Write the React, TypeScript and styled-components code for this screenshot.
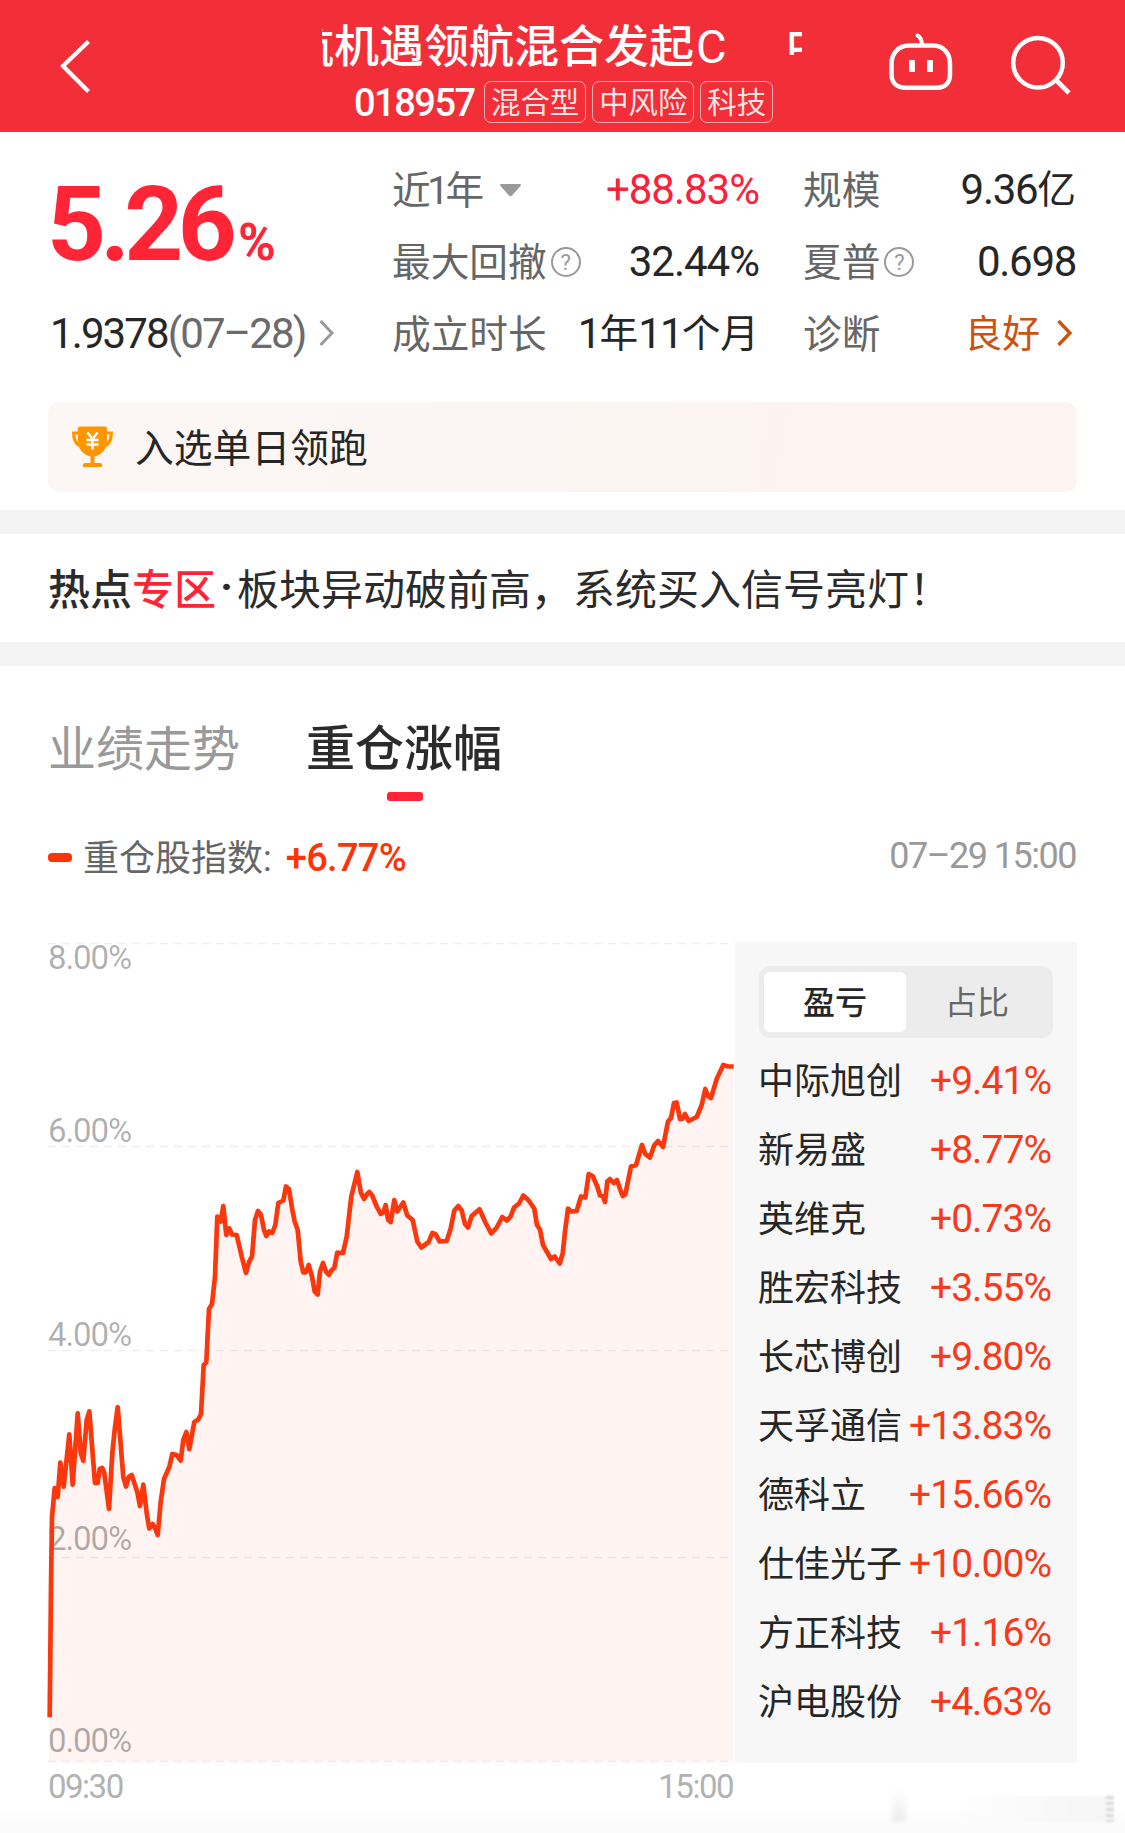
import React from 'react';
import styled, { createGlobalStyle } from 'styled-components';

const FONT = `Roboto, "Noto Sans CJK SC", "Liberation Sans", sans-serif`;

const GlobalStyle = createGlobalStyle`
  *, *::before, *::after { box-sizing: border-box; }
  body { margin: 0; background: #fff; font-family: ${FONT}; color: #262626; }
`;

const Page = styled.main`
  width: 1125px;
  height: 1833px;
  overflow: hidden;
  display: flex;
  flex-direction: column;
  background: #fff;
`;

/* ---------- header ---------- */

const Header = styled.header`
  height: 132px;
  flex: none;
  display: flex;
  background: #f22f38;
  color: #fff;
`;

const HeaderSide = styled.div<{ $width: number }>`
  width: ${(p) => p.$width}px;
  flex: none;
`;

const TitleColumn = styled.div`
  width: 480px;
  padding-top: 14px;
`;

const Marquee = styled.div`
  height: 63px;
  padding-top: 4px;
  overflow: hidden;
  display: flex;
  gap: 59px;
  white-space: nowrap;
  font-size: 45px;
  line-height: 58px;
  font-weight: 500;
`;

const MarqueeItem = styled.span<{ $shift?: number }>`
  flex: none;
  margin-left: ${(p) => p.$shift ?? 0}px;
`;

const ShareClass = styled.span`
  font-size: 47px;
  font-weight: 400;
  margin-left: 2px;
`;

const CodeLine = styled.div`
  display: flex;
  align-items: center;
  margin: 4px 0 0 32px;
  height: 42px;
`;

const FundCode = styled.span`
  width: 130px;
  padding-top: 2px;
  font-size: 38px;
  line-height: 42px;
  font-weight: 500;
  letter-spacing: -1.5px;
`;

const Tag = styled.span`
  height: 42px;
  padding: 0 6px;
  margin-right: 6px;
  border: 1.5px solid rgba(255, 255, 255, 0.6);
  border-radius: 7px;
  font-size: 29.4px;
  line-height: 42px;
  color: rgba(255, 255, 255, 0.88);
  white-space: nowrap;
`;

/* ---------- summary ---------- */

const Summary = styled.section`
  height: 270px;
  flex: none;
  display: flex;
  padding: 21px 48px 0 50px;
`;

const ReturnColumn = styled.div`
  width: 342px;
`;

const DayReturn = styled.div`
  height: 144px;
  padding-top: 12px;
  margin-left: -3px;
  font-size: 103px;
  line-height: 120px;
  font-weight: 700;
  letter-spacing: -5.8px;
  color: #ff2436;
  white-space: nowrap;

  small {
    font-size: 51px;
    margin-left: 7px;
  }
`;

const NetValue = styled.div`
  height: 72px;
  display: flex;
  align-items: center;
  font-size: 42px;
  letter-spacing: -1.9px;
  color: #262626;

  span { color: #6b6b6b; }
  svg { margin-left: 14px; }
`;

const StatColumn = styled.div<{ $width: number; $gap?: number }>`
  width: ${(p) => p.$width}px;
  margin-right: ${(p) => p.$gap ?? 0}px;
`;

const StatRow = styled.div`
  height: 72px;
  display: flex;
  align-items: center;
  justify-content: space-between;
  white-space: nowrap;
`;

const StatLabel = styled.span`
  display: flex;
  align-items: center;
  padding-top: 3px;
  font-size: 38.7px;
  line-height: 56px;
  color: #666;
`;

const NarrowDigit = styled.span`
  margin: 0 -3.5px;
`;

const StatValue = styled.span<{ $color?: string; $cjk?: boolean; $spacing?: number }>`
  display: flex;
  align-items: center;
  padding-top: 2px;
  font-size: ${(p) => (p.$cjk ? 37.8 : 42)}px;
  line-height: 56px;
  letter-spacing: ${(p) => (p.$cjk ? 0 : p.$spacing ?? -1)}px;
  color: ${(p) => p.$color ?? '#262626'};

  b { font-weight: 400; font-size: 38.7px; letter-spacing: 0; }
  svg { margin: 0 4px 2px 17px; }
`;

/* ---------- banners ---------- */

const Award = styled.div`
  height: 90px;
  flex: none;
  margin: 0 48px 18px;
  padding-left: 23px;
  display: flex;
  align-items: center;
  gap: 21px;
  border-radius: 11px;
  background: linear-gradient(100deg, #fcf7f5, #fbf6f3 50%, #fdf3f0 75%);
  font-size: 38.8px;
  color: #262626;

  span { padding-bottom: 5px; }
`;

const Divider = styled.div`
  height: 24px;
  flex: none;
  background: #f4f4f4;
`;

const HotLine = styled.div`
  height: 108px;
  flex: none;
  display: flex;
  align-items: center;
  padding: 0 0 4px 48px;
  font-size: 42px;
  white-space: nowrap;
  color: #2b2b2b;

  b { font-weight: 500; }
  i { width: 21px; text-align: center; font-style: normal; font-weight: 700; }
`;

const Accent = styled.b`
  color: #ff2436;
`;

/* ---------- tabs and legend ---------- */

const Tabs = styled.nav`
  height: 135px;
  flex: none;
  display: flex;
  align-items: flex-end;
  gap: 66px;
  padding-left: 48px;
`;

const Tab = styled.div<{ $active?: boolean }>`
  height: 86px;
  display: flex;
  flex-direction: column;
  align-items: center;
  justify-content: space-between;
  font-size: ${(p) => (p.$active ? 49 : 48)}px;
  line-height: 70px;
  font-weight: ${(p) => (p.$active ? 500 : 400)};
  color: ${(p) => (p.$active ? '#2b2b2b' : '#999')};

  &::after {
    content: '';
    width: 36px;
    height: 9px;
    margin-left: 2px;
    border-radius: 3px;
    background: ${(p) => (p.$active ? '#ff2436' : 'transparent')};
  }
`;

const Legend = styled.div`
  height: 141px;
  flex: none;
  display: flex;
  align-items: flex-start;
  padding: 31px 49px 0 48px;
  font-size: 36px;
  line-height: 50px;
  color: #666;
`;

const LegendLabel = styled.span`
  padding-top: 2px;
`;

const LegendMark = styled.span`
  width: 24px;
  height: 9px;
  margin: 21px 11px 0 0;
  border-radius: 4px;
  background: #fe3407;
`;

const LegendValue = styled.span`
  margin: 1px 0 0 14px;
  font-size: 38px;
  font-weight: 500;
  letter-spacing: -0.7px;
  color: #fe3407;
`;

const LegendTime = styled.span`
  margin: -1px 0 0 auto;
  letter-spacing: -1.5px;
  color: #999;
`;

/* ---------- chart and holdings ---------- */

const ChartRow = styled.section`
  height: 821px;
  flex: none;
  display: flex;
  padding-left: 48px;
`;

const ChartColumn = styled.div`
  width: 687px;
  flex: none;
`;

const TimeAxis = styled.div`
  display: flex;
  justify-content: space-between;
  margin-top: 3px;
  padding-right: 2px;
  font-size: 33px;
  line-height: 42px;
  letter-spacing: -1.5px;
  color: #b2b2b2;
`;

const ChartSvg = styled.svg`
  display: block;
  width: 687px;
  height: 821px;
  overflow: visible;

  text {
    font-family: ${FONT};
    font-size: 33px;
    letter-spacing: -1.1px;
    fill: rgba(0, 0, 0, 0.31);
  }
`;

const Panel = styled.aside`
  width: 342px;
  height: 821px;
  padding: 24px 24px 0 24px;
  background: #f7f7f7;
`;

const Segmented = styled.div`
  height: 72px;
  padding: 6px 5px;
  display: flex;
  border-radius: 11px;
  background: #ececec;
`;

const Segment = styled.div<{ $active?: boolean }>`
  flex: 1;
  border-radius: 6px;
  background: ${(p) => (p.$active ? '#fff' : 'transparent')};
  color: ${(p) => (p.$active ? '#262626' : '#666')};
  font-size: 32px;
  line-height: 62px;
  font-weight: ${(p) => (p.$active ? 500 : 400)};
  text-align: center;
`;

const Holdings = styled.div`
  padding: 9px 2px 0 0;
  margin-left: -1px;
`;

const Holding = styled.div`
  height: 69px;
  display: flex;
  align-items: center;
  justify-content: space-between;
  white-space: nowrap;
  font-size: 36px;
  line-height: 54px;
  color: #262626;
`;

const Change = styled.span`
  padding-bottom: 1px;
  font-size: 39px;
  letter-spacing: -0.95px;
  color: #f83a1a;
`;

const Footer = styled.footer`
  flex: 1;
  display: flex;
  justify-content: flex-end;
  align-items: flex-end;
  padding: 0 11px 11px 0;
  background: linear-gradient(to bottom, rgba(250, 250, 250, 0) 60%, #fafafa);
`;

const SmudgeBar = styled.div`
  width: 14px;
  height: 35px;
  margin-right: 50px;
  background: linear-gradient(to bottom, rgba(245, 245, 245, 0), #ededed);
  filter: blur(2px);
`;

const SmudgeTrail = styled.div`
  width: 150px;
  height: 26px;
  background: linear-gradient(to right, rgba(250, 250, 250, 0), #fafafa 40%, #f6f6f6);
  filter: blur(1px);
`;

const SmudgeTip = styled.div`
  width: 8px;
  height: 26px;
  background: repeating-linear-gradient(to bottom, #d8d8d8 0 2px, #f8f8f8 4px 6px);
  filter: blur(1px);
`;

/* ---------- icons ---------- */

const BackIcon = () => (
  <svg width="322" height="132" viewBox="0 0 322 132" fill="none">
    <path d="M88.500 41.500 63 66 88.500 91.500" stroke="#fff" strokeWidth="4.2" />
  </svg>
);

const HeaderActions = () => (
  <svg width="323" height="132" viewBox="802 0 323 132" fill="none" stroke="#fff" strokeWidth="4.5">
    <path d="M917.5 35.5Q922 38 922 45" strokeLinecap="round" strokeWidth="4" />
    <path d="M909 45.5H933C944 45.5 950 54 950 64V74C950 83 945 87.800 936 87.800H906C897 87.800 891.500 83 891.500 74V64C891.500 54 898 45.500 909 45.500Z" />
    <path d="M912 60v12M930 60v12" strokeWidth="5.8" />
    <circle cx="1038" cy="62.700" r="24.800" />
    <path d="M1055.500 79.500 1069 93" strokeWidth="4.600" />
  </svg>
);

const Chevron = ({ color, width = 3 }: { color: string; width?: number }) => (
  <svg width="15" height="28" viewBox="0 0 15 28" fill="none">
    <path d="M1.5 2 13 14 1.5 26" stroke={color} strokeWidth={width} />
  </svg>
);

const HelpMark = styled.span`
  width: 30px;
  height: 30px;
  margin: 0 0 2px 4px;
  border: 2px solid #999;
  border-radius: 50%;
  font-size: 22px;
  line-height: 27px;
  text-align: center;
  color: #999;
`;

const CaretIcon = styled.svg`
  width: 23px;
  height: 14px;
  margin: 0 0 2px 15px;
`;

const Caret = () => (
  <CaretIcon viewBox="0 0 23 14">
    <path d="M2 1H21Q22.500 1 21.500 3L13 12.500Q11.500 14 10 12.500L1.500 3Q.5 1 2 1Z" fill="#999" />
  </CaretIcon>
);

const Trophy = () => (
  <svg width="43" height="42" viewBox="0 0 43 42" fill="none">
    <path d="M8 7H2.700C2.700 15 5.500 19.500 12 20.500M35 7H40.300C40.300 15 37.500 19.500 31 20.500" stroke="#ff9500" strokeWidth="3.200" />
    <path d="M9 .5H34Q36 .5 36 2.500V15C36 24 30 29 23.500 30.500V37H29Q31 37 31 39V41H12V39Q12 37 14 37H19.500V30.500C13 29 7 24 7 15V2.500Q7 .5 9 .5Z" fill="#ff9500" />
    <path d="M16.500 6.500 21.500 13 26.500 6.500M21.500 13V23.500M15.500 14H27.500M15.500 18.500H27.500" stroke="#fff" strokeWidth="2.500" />
  </svg>
);

/* ---------- data ---------- */

const holdings: [string, string][] = [
  ['中际旭创', '+9.41%'],
  ['新易盛', '+8.77%'],
  ['英维克', '+0.73%'],
  ['胜宏科技', '+3.55%'],
  ['长芯博创', '+9.80%'],
  ['天孚通信', '+13.83%'],
  ['德科立', '+15.66%'],
  ['仕佳光子', '+10.00%'],
  ['方正科技', '+1.16%'],
  ['沪电股份', '+4.63%'],
];

const gridLines = [
  { label: '8.00%', y: 943.5, baseline: 969 },
  { label: '6.00%', y: 1146.5, baseline: 1141.5 },
  { label: '4.00%', y: 1350.5, baseline: 1346 },
  { label: '2.00%', y: 1557.5, baseline: 1550 },
  { label: '0.00%', y: 1761.5, baseline: 1752 },
];

const series = `49.7,1717.3 51,1586.7 52,1516.7 54.7,1488 57.7,1497 60.3,1462.7 63.7,1486.7 69.3,1434.3 72.7,1484.7
77.7,1413.3 80.7,1453 83.3,1460.7 86.7,1420 89.3,1411.3 95,1483 97.7,1483 99.7,1469 102.3,1468 104.3,1473 109,1509
112.3,1453 115,1427 117.7,1407 121.7,1457 123.3,1477 126,1486.5 128.7,1477 131.7,1475 137.3,1492 140,1506 143.3,1484.5
146.7,1513 149.3,1528.5 152.7,1524 155,1528 157.7,1535 160.7,1502 164,1479 169.3,1467 172.3,1454 176.7,1455 180.7,1460.5
183.3,1440 186.3,1432 189.3,1449 194.3,1422 198.3,1419.5 201,1414 203.7,1365 206.3,1362.5 209,1309 212,1304 215,1276.5
217.3,1216.5 220.7,1221.5 223.3,1206 226.3,1235 229.3,1228.5 232,1234.5 236.7,1235 241.7,1256.5 246,1273 249,1262
252,1256.5 255,1220 258,1211 261,1215 264,1230 266.3,1236 269,1231.5 272.3,1233 275.3,1225 278.3,1203 283.3,1200.5
286,1186.5 289,1189 292,1208 294.7,1221.5 297.7,1230 300.7,1261.5 303.3,1272.5 305.7,1272.5 308.7,1265 312,1276.5
314.7,1291.5 317.7,1294.5 320,1271.5 323,1263 326,1271.5 329,1275 331.3,1270.5 334.3,1268 337.3,1252.5 343,1253
346.7,1236.5 351.3,1196.5 357.3,1172 361,1193 364,1199 366.7,1194.5 369.3,1192 372,1195 376.7,1206.5 380.7,1214
383.3,1212.5 385.7,1205 388,1219.5 390.7,1222 394.3,1200 397.3,1211.5 403.3,1202.5 407.3,1215.5 412.7,1220 417.3,1241.5
421.3,1247.5 425.3,1244.5 428.7,1242 432.3,1233 435.7,1234.5 439.7,1241.5 446.7,1241 450.7,1228.5 454.3,1210.5
458.3,1206 461.7,1210.5 465,1224 468,1227.5 471.7,1216 479.5,1209.2 485.7,1223 491.3,1233.5 496.7,1227.5 502.3,1217
506.7,1220.5 510.7,1216.5 514,1207.5 519,1203.5 523.3,1195.5 528.3,1200 534.3,1208.5 537,1225 540,1229.5 543,1245
547.3,1252.5 551,1259 554.7,1256.5 559.7,1263.5 562.7,1253.5 565,1231.5 568,1208.5 571.3,1211.5 576.7,1211 581,1196.5
585.3,1197.5 588.7,1174 592.7,1176 597.3,1186.5 600,1195.5 602.7,1196 605,1202 607.3,1181.5 610,1179 613.7,1183 617,1180
620,1189 622.7,1196 625.3,1194.5 631,1166.5 636,1165 642,1145 645.3,1154 650,1157.5 654.3,1145 658,1141 663,1147
668,1121.5 671,1118 674,1103 676.7,1102.5 680,1119 682.3,1119 685,1114 688.7,1121 696.7,1117 701.7,1105 705.3,1089
708,1096 711,1098 716.7,1079 723.3,1065 728.3,1066.5 733.7,1066.5`;

const FundChart = () => (
  <ChartSvg viewBox="48 942 687 821">
    <polygon points={`49,1761 ${series} 733.7,1761`} fill="#fff4f1" />
    {gridLines.map((g) => (
      <g key={g.label}>
        <line x1="48" x2="734" y1={g.y} y2={g.y} stroke="#000" strokeOpacity="0.07" strokeWidth="1.6" strokeDasharray="8 6" />
        <text x="48" y={g.baseline}>{g.label}</text>
      </g>
    ))}
    <polyline points={series} fill="none" stroke="#fb370d" strokeWidth="4.700" strokeLinejoin="round" />
  </ChartSvg>
);

const FundName = () => (
  <>中航机遇领航混合发起<ShareClass>C</ShareClass></>
);

export default function App() {
  return (
    <>
      <GlobalStyle />
      <Page>
        <Header>
          <HeaderSide $width={322}><BackIcon /></HeaderSide>
          <TitleColumn>
            <Marquee>
              <MarqueeItem $shift={-78}><FundName /></MarqueeItem>
              <MarqueeItem><FundName /></MarqueeItem>
            </Marquee>
            <CodeLine>
              <FundCode>018957</FundCode>
              <Tag>混合型</Tag>
              <Tag>中风险</Tag>
              <Tag>科技</Tag>
            </CodeLine>
          </TitleColumn>
          <HeaderSide $width={323}><HeaderActions /></HeaderSide>
        </Header>

        <Summary>
          <ReturnColumn>
            <DayReturn>5.26<small>%</small></DayReturn>
            <NetValue>1.9378<span>(07–28)</span><Chevron color="#999" /></NetValue>
          </ReturnColumn>
          <StatColumn $width={367} $gap={44}>
            <StatRow>
              <StatLabel>近<NarrowDigit>1</NarrowDigit>年<Caret /></StatLabel>
              <StatValue $color="#f9213b">+88.83%</StatValue>
            </StatRow>
            <StatRow>
              <StatLabel>最大回撤<HelpMark>?</HelpMark></StatLabel>
              <StatValue>32.44%</StatValue>
            </StatRow>
            <StatRow>
              <StatLabel>成立时长</StatLabel>
              <StatValue $spacing={-1.9}>1<b>年</b>11<b>个月</b></StatValue>
            </StatRow>
          </StatColumn>
          <StatColumn $width={273}>
            <StatRow>
              <StatLabel>规模</StatLabel>
              <StatValue $spacing={-1.3}>9.36<b>亿</b></StatValue>
            </StatRow>
            <StatRow>
              <StatLabel>夏普<HelpMark>?</HelpMark></StatLabel>
              <StatValue $spacing={-1.3}>0.698</StatValue>
            </StatRow>
            <StatRow>
              <StatLabel>诊断</StatLabel>
              <StatValue $cjk $color="#cc5210">良好<Chevron color="#cc5210" width={3.4} /></StatValue>
            </StatRow>
          </StatColumn>
        </Summary>

        <Award><Trophy /><span>入选单日领跑</span></Award>
        <Divider />
        <HotLine>
          <b>热点</b><Accent>专区</Accent><i>·</i>板块异动破前高，系统买入信号亮灯！
        </HotLine>
        <Divider />

        <Tabs>
          <Tab>业绩走势</Tab>
          <Tab $active>重仓涨幅</Tab>
        </Tabs>
        <Legend>
          <LegendMark />
          <LegendLabel>重仓股指数:</LegendLabel>
          <LegendValue>+6.77%</LegendValue>
          <LegendTime>07–29 15:00</LegendTime>
        </Legend>

        <ChartRow>
          <ChartColumn>
            <FundChart />
            <TimeAxis><span>09:30</span><span>15:00</span></TimeAxis>
          </ChartColumn>
          <Panel>
            <Segmented>
              <Segment $active>盈亏</Segment>
              <Segment>占比</Segment>
            </Segmented>
            <Holdings>
              {holdings.map(([name, change]) => (
                <Holding key={name}>{name}<Change>{change}</Change></Holding>
              ))}
            </Holdings>
          </Panel>
        </ChartRow>
        <Footer>
          <SmudgeBar />
          <SmudgeTrail />
          <SmudgeTip />
        </Footer>
      </Page>
    </>
  );
}
